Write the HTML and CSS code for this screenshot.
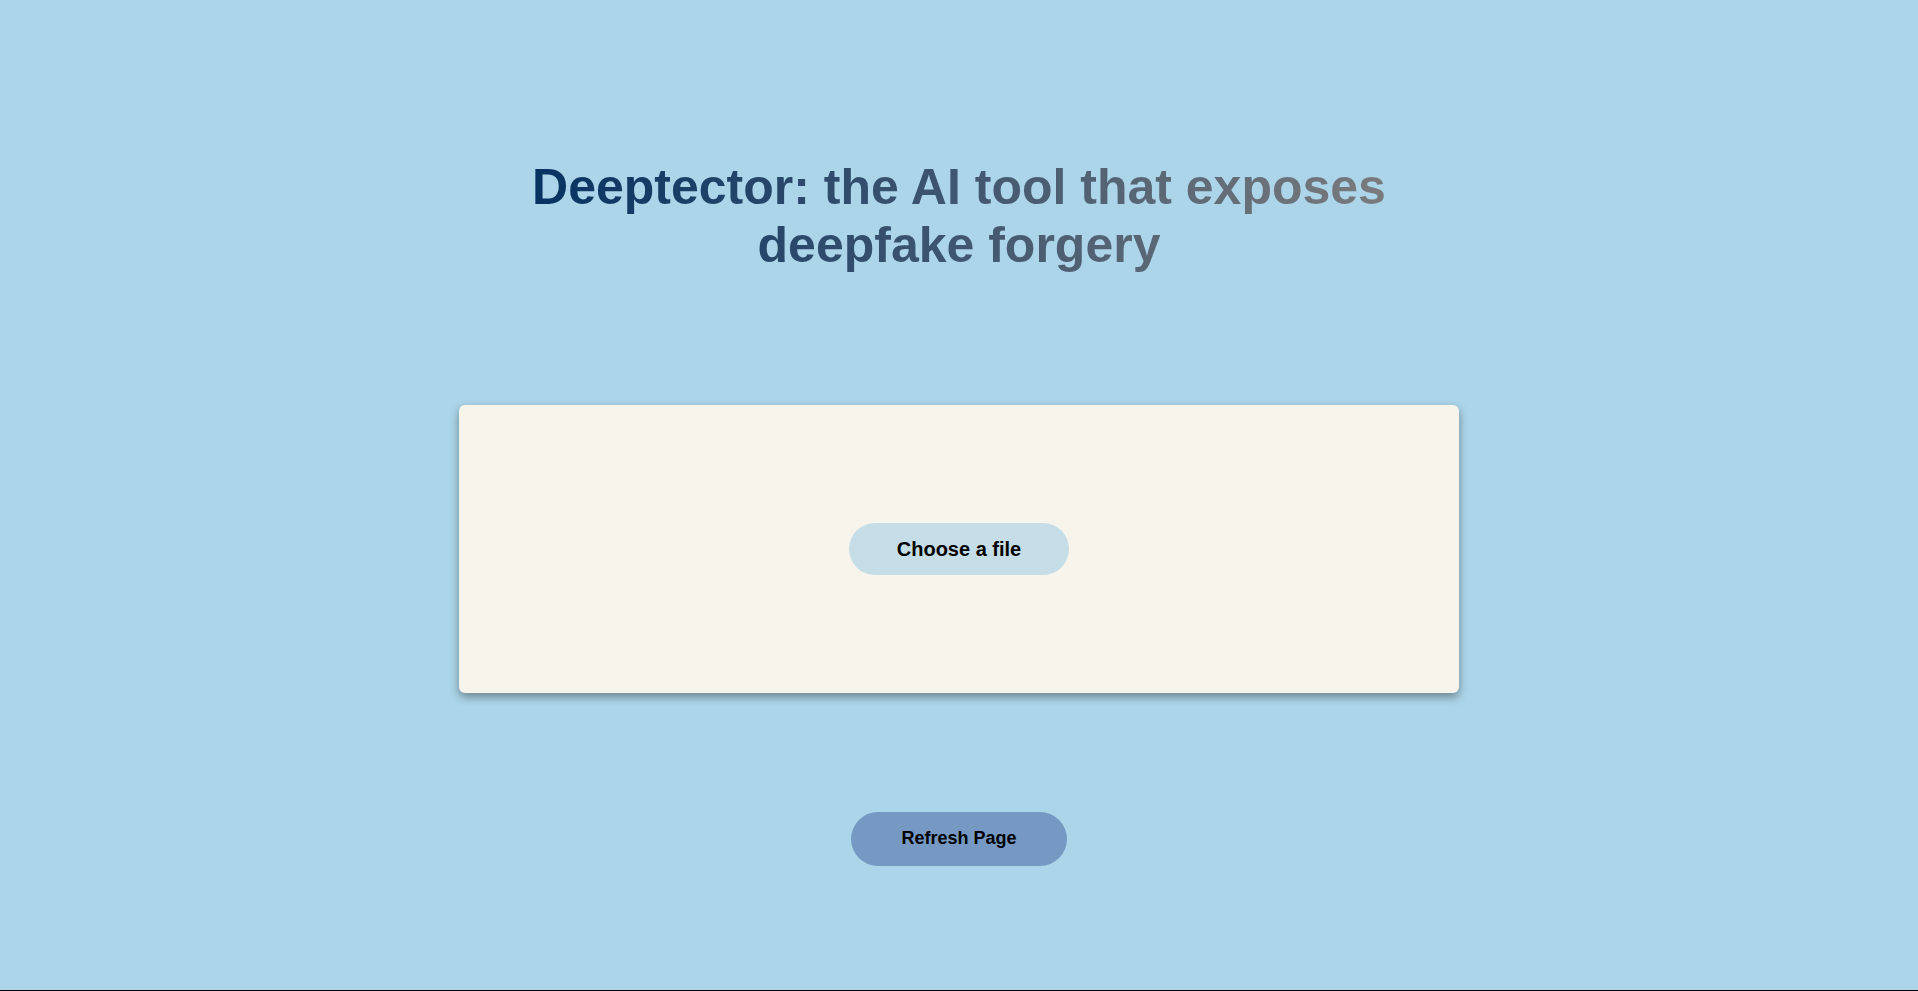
FILE: index.html
```html
<!DOCTYPE html>
<html lang="en">
<head>
<meta charset="utf-8">
<title>Deeptector</title>
<link rel="stylesheet" href="styles.css">
</head>
<body>
<main class="page">
  <h1 class="title">Deeptector: the AI tool that exposes deepfake forgery</h1>
  <section class="card">
    <button class="choose" type="button">Choose a file</button>
  </section>
  <button class="refresh" type="button">Refresh Page</button>
</main>
</body>
</html>
```

FILE: styles.css
```css
html, body {
  margin: 0;
  padding: 0;
  background: #acd5e9;
}

.page {
  box-sizing: border-box;
  min-height: 100vh;
  display: flex;
  flex-direction: column;
  align-items: center;
  padding-top: 159px;
  border-bottom: 1px solid #000;
  font-family: "Liberation Sans", Arial, sans-serif;
}

.title {
  margin: 0;
  max-width: 860px;
  font-size: 50px;
  font-weight: bold;
  line-height: 57.5px;
  text-align: center;
  background: linear-gradient(to right, #063262, #7a7b7d);
  -webkit-background-clip: text;
  background-clip: text;
  color: transparent;
}

.card {
  box-sizing: border-box;
  margin-top: 131px;
  width: 1000px;
  height: 288px;
  background: #f7f4ec;
  border-radius: 6px;
  box-shadow: 0 4px 10px rgba(0, 0, 0, 0.38);
  display: flex;
  align-items: center;
  justify-content: center;
}

.choose {
  width: 220px;
  height: 52px;
  border: none;
  border-radius: 26px;
  background: #c5dde6;
  color: #000;
  font-family: "Liberation Sans", Arial, sans-serif;
  font-size: 20px;
  font-weight: bold;
  cursor: pointer;
}

.refresh {
  margin-top: 119px;
  width: 216px;
  height: 54px;
  padding-bottom: 2px;
  border: none;
  border-radius: 27px;
  background: #7599c2;
  color: #000;
  font-family: "Liberation Sans", Arial, sans-serif;
  font-size: 18px;
  font-weight: bold;
  cursor: pointer;
}
```
